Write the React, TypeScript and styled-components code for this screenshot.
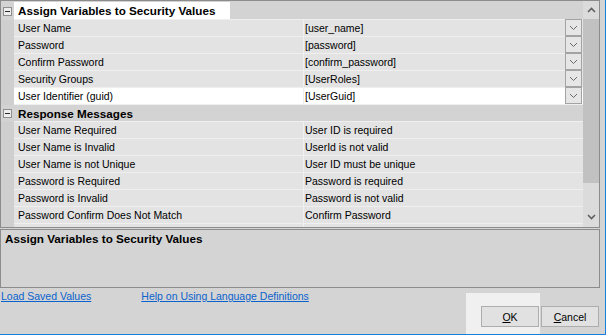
import React from 'react';
import styled, { createGlobalStyle } from 'styled-components';

const GlobalStyle = createGlobalStyle`
  html, body { margin: 0; padding: 0; background: #ffffff; }
  body {
    font-family: "Liberation Sans", Arial, sans-serif;
    font-size: 10.5px;
    color: #000;
  }
  * { box-sizing: border-box; }
`;

const Window = styled.div`
  width: 606px;
  height: 335px;
  background: #d4d4d4;
  border-right: 1px solid #1a7fd8;
  border-bottom: 1px solid #1a7fd8;
  display: flex;
  flex-direction: column;
`;

const Grid = styled.div`
  width: 600px;
  height: 228px;
  border: 1px solid #8c8c8c;
  display: flex;
  background: #d3d3d3;
`;

const GridBody = styled.div`
  flex: 1;
  padding-top: 1px;
  overflow: hidden;
  display: flex;
  flex-direction: column;
`;

const Row = styled.div`
  display: flex;
  flex: none;
`;

const Margin = styled.div<{ $category?: boolean }>`
  width: 13px;
  flex: none;
  background: ${({ $category }) => ($category ? '#d3d3d3' : '#cfcfcf')};
  display: flex;
  align-items: center;
  padding-left: 2px;
`;

const Expander = styled.div`
  width: 9px;
  height: 9px;
  border: 1px solid #8e8e8e;
  background: #ededed;
  display: flex;
  align-items: center;
  justify-content: center;
  &::after {
    content: '';
    width: 5px;
    height: 1px;
    background: #2a2a2a;
  }
`;

const Cells = styled.div<{ $category?: boolean; $selected?: boolean; $tall?: boolean }>`
  flex: 1;
  display: flex;
  height: ${({ $tall }) => ($tall ? 18 : 17)}px;
  border-bottom: 1px solid #efefef;
  background: ${({ $category, $selected }) =>
    $selected ? '#ffffff' : $category ? '#d3d3d3' : '#e3e3e3'};
`;

const CategoryLabel = styled.div<{ $highlight?: boolean }>`
  width: ${({ $highlight }) => ($highlight ? '216px' : 'auto')};
  background: ${({ $highlight }) => ($highlight ? '#ffffff' : 'transparent')};
  padding-left: 4px;
  font-weight: bold;
  font-size: 11.7px;
  line-height: 17px;
  white-space: nowrap;
`;

const Label = styled.div`
  width: 290px;
  flex: none;
  padding-left: 4px;
  border-right: 1px solid #f0f0f0;
  line-height: 16px;
  white-space: nowrap;
  overflow: hidden;
`;

const Value = styled.div`
  flex: 1;
  display: flex;
  padding-left: 1px;
  padding-right: 1px;
  min-width: 0;
`;

const ValueText = styled.span`
  flex: 1;
  line-height: 16px;
  white-space: nowrap;
  overflow: hidden;
`;

const DropButton = styled.div`
  width: 17px;
  height: 17px;
  margin-top: -1px;
  flex: none;
  border: 1px solid #a3a3a3;
  background: #e6e6e6;
  display: flex;
  align-items: center;
  justify-content: center;
  position: relative;
  z-index: 1;
`;

const ScrollBar = styled.div`
  width: 16px;
  flex: none;
  display: flex;
  flex-direction: column;
  background: #dbdbdb;
`;

const ScrollArrow = styled.div<{ $down?: boolean }>`
  height: 18px;
  flex: none;
  display: flex;
  justify-content: center;
  align-items: ${({ $down }) => ($down ? 'flex-start' : 'center')};
  padding-top: ${({ $down }) => ($down ? '5px' : '0')};
  margin-top: ${({ $down }) => ($down ? 'auto' : '0')};
`;

const Thumb = styled.div`
  height: 164px;
  flex: none;
  background: #c1c1c1;
`;

const Description = styled.div`
  margin-top: 1px;
  width: 600px;
  height: 59px;
  border: 1px solid #8c8c8c;
  padding: 2px 4px;
  font-weight: bold;
  font-size: 11.7px;
  line-height: 14px;
`;

const Footer = styled.div`
  flex: 1;
  display: flex;
  align-items: flex-start;
`;

const Links = styled.div`
  display: flex;
  gap: 50px;
  padding: 2px 0 0 1px;
`;

const Link = styled.a`
  color: #0a62cc;
  text-decoration: underline;
  line-height: 13px;
  cursor: pointer;
`;

const ButtonArea = styled.div`
  margin-left: auto;
  align-self: stretch;
  display: flex;
  align-items: flex-start;
  padding-right: 6px;
`;

const OkWell = styled.div`
  align-self: stretch;
  margin-top: 5px;
  padding: 13px 1px 0 15px;
  background: #f0f0f0;
`;

const Button = styled.button<{ $offset?: boolean }>`
  width: 58px;
  height: 21px;
  margin-top: ${({ $offset }) => ($offset ? '18px' : '0')};
  margin-left: ${({ $offset }) => ($offset ? '1px' : '0')};
  border: 1px solid #adadad;
  background: #e1e1e1;
  font-family: "Liberation Sans", Arial, sans-serif;
  font-size: 10.5px;
  color: #000;
  padding: 0;
  u { text-decoration: underline; }
`;

const Chevron = ({ up, color, width }: { up?: boolean; color: string; width: number }) => (
  <svg width="9" height="6" viewBox="0 0 9 6">
    <polyline
      points={up ? '1,5 4.5,1.5 8,5' : '1,1 4.5,4.5 8,1'}
      fill="none"
      stroke={color}
      strokeWidth={width}
    />
  </svg>
);

const variables: [string, string][] = [
  ['User Name', '[user_name]'],
  ['Password', '[password]'],
  ['Confirm Password', '[confirm_password]'],
  ['Security Groups', '[UserRoles]'],
  ['User Identifier (guid)', '[UserGuid]'],
];

const messages: [string, string][] = [
  ['User Name Required', 'User ID is required'],
  ['User Name is Invalid', 'UserId is not valid'],
  ['User Name is not Unique', 'User ID must be unique'],
  ['Password is Required', 'Password is required'],
  ['Password is Invalid', 'Password is not valid'],
  ['Password Confirm Does Not Match', 'Confirm Password'],
  ['', ''],
];

const Category = ({ title, first }: { title: string; first?: boolean }) => (
  <Row>
    <Margin $category>
      <Expander />
    </Margin>
    <Cells $category $tall={first}>
      <CategoryLabel $highlight={first}>{title}</CategoryLabel>
    </Cells>
  </Row>
);

const PropRow = ({
  label,
  value,
  dropdown,
  selected,
}: {
  label: string;
  value: string;
  dropdown?: boolean;
  selected?: boolean;
}) => (
  <Row>
    <Margin />
    <Cells $selected={selected}>
      <Label>{label}</Label>
      <Value>
        <ValueText>{value}</ValueText>
        {dropdown && (
          <DropButton>
            <Chevron color="#6a6a6a" width={1} />
          </DropButton>
        )}
      </Value>
    </Cells>
  </Row>
);

export default function App() {
  return (
    <>
      <GlobalStyle />
      <Window>
        <Grid>
          <GridBody>
            <Category title="Assign Variables to Security Values" first />
            {variables.map(([l, v], i) => (
              <PropRow key={l} label={l} value={v} dropdown selected={i === 4} />
            ))}
            <Category title="Response Messages" />
            {messages.map(([l, v], i) => (
              <PropRow key={i} label={l} value={v} />
            ))}
          </GridBody>
          <ScrollBar>
            <ScrollArrow>
              <Chevron up color="#606060" width={1.6} />
            </ScrollArrow>
            <Thumb />
            <ScrollArrow $down>
              <Chevron color="#606060" width={1.6} />
            </ScrollArrow>
          </ScrollBar>
        </Grid>
        <Description>Assign Variables to Security Values</Description>
        <Footer>
          <Links>
            <Link>Load Saved Values</Link>
            <Link>Help on Using Language Definitions</Link>
          </Links>
          <ButtonArea>
            <OkWell>
              <Button>
                <u>O</u>K
              </Button>
            </OkWell>
            <Button $offset>
              <u>C</u>ancel
            </Button>
          </ButtonArea>
        </Footer>
      </Window>
    </>
  );
}
